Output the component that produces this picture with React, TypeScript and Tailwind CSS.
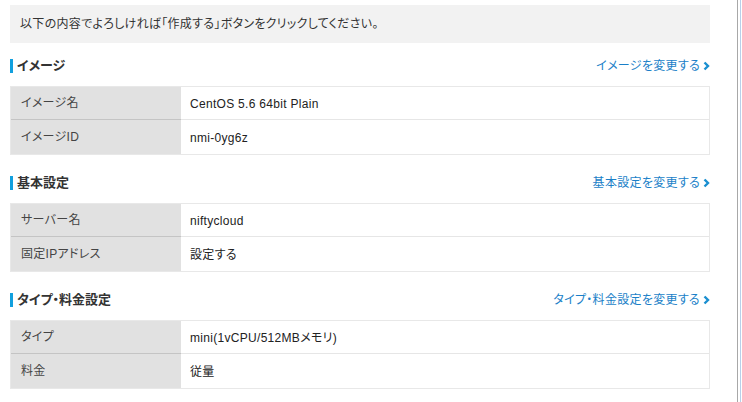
import React from "react";

const font = "[font-family:'Liberation_Sans','Noto_Sans_CJK_JP',sans-serif] [font-feature-settings:'palt']";

type Row = { label: string; value: string };
type Section = { title: string; link: string; rows: Row[] };

const sections: Section[] = [
	{
		title: "イメージ",
		link: "イメージを変更する",
		rows: [
			{ label: "イメージ名", value: "CentOS 5.6 64bit Plain" },
			{ label: "イメージID", value: "nmi-0yg6z" },
		],
	},
	{
		title: "基本設定",
		link: "基本設定を変更する",
		rows: [
			{ label: "サーバー名", value: "niftycloud" },
			{ label: "固定IPアドレス", value: "設定する" },
		],
	},
	{
		title: "タイプ・料金設定",
		link: "タイプ・料金設定を変更する",
		rows: [
			{ label: "タイプ", value: "mini(1vCPU/512MBメモリ)" },
			{ label: "料金", value: "従量" },
		],
	},
];

function Chevron() {
	return (
		<svg width="7" height="10" viewBox="0 0 7 10" className="ml-[3px]">
			<polyline points="1.5,1.5 5,5 1.5,8.5" fill="none" stroke="#1a8fd0" strokeWidth="2.4" />
		</svg>
	);
}

function InfoSection({ section }: { section: Section }) {
	return (
		<div className="flex flex-col">
			<div className="flex items-center justify-between h-[14px]">
				<div className="flex items-center h-full">
					<div className="w-[3px] h-full bg-[#12a0de]" />
					<h2 className="ml-[4px] text-[13px] font-bold text-[#333] leading-[14px]">
						{section.title}
					</h2>
				</div>
				<a className="flex items-center text-[12px] text-[#1a7fc8] leading-[14px] tracking-[0.3px]">
					{section.link}
					<Chevron />
				</a>
			</div>
			<div className="mt-[13px] border border-[#e8e8e8] flex flex-col">
				{section.rows.map((row, i) => (
					<div
						key={row.label}
						className={
							i === 0
								? "flex h-[32px]"
								: "flex h-[35px] border-t border-[#e6e6e6]"
						}>
						<div
							className={
								i === 0
									? "w-[170px] bg-[#e1e1e1] flex items-center pl-[10px] text-[12px] text-[#444] tracking-[0.3px]"
									: "w-[170px] bg-[#e1e1e1] flex items-center pl-[10px] text-[12px] text-[#444] tracking-[0.3px] border-t border-[#c4c4c4] -mt-px"
							}>
							{row.label}
						</div>
						<div className="flex-1 flex items-center pl-[9px] pt-[2px] text-[12px] text-[#222] tracking-[0.3px]">
							{row.value}
						</div>
					</div>
				))}
			</div>
		</div>
	);
}

export default function App() {
	return (
		<div className={`${font} w-[742px] h-[402px] bg-white flex overflow-hidden`}>
			<div className="w-[737px] pl-[10px] pt-[5px]">
				<div className="w-[700px] flex flex-col">
					<div className="h-[38px] bg-[#f2f2f2] flex items-center pl-[10px] text-[12px] text-[#333] tracking-[0.3px]">
						以下の内容でよろしければ「作成する」ボタンをクリックしてください。
					</div>
					<div className="mt-[16px] flex flex-col gap-[21px]">
						{sections.map((s) => (
							<InfoSection key={s.title} section={s} />
						))}
					</div>
				</div>
			</div>
			<div className="w-px h-full bg-[#a8a8a8]" />
			<div className="w-[2px] h-full bg-white" />
			<div className="w-px h-full bg-[#b8d0ea]" />
		</div>
	);
}
